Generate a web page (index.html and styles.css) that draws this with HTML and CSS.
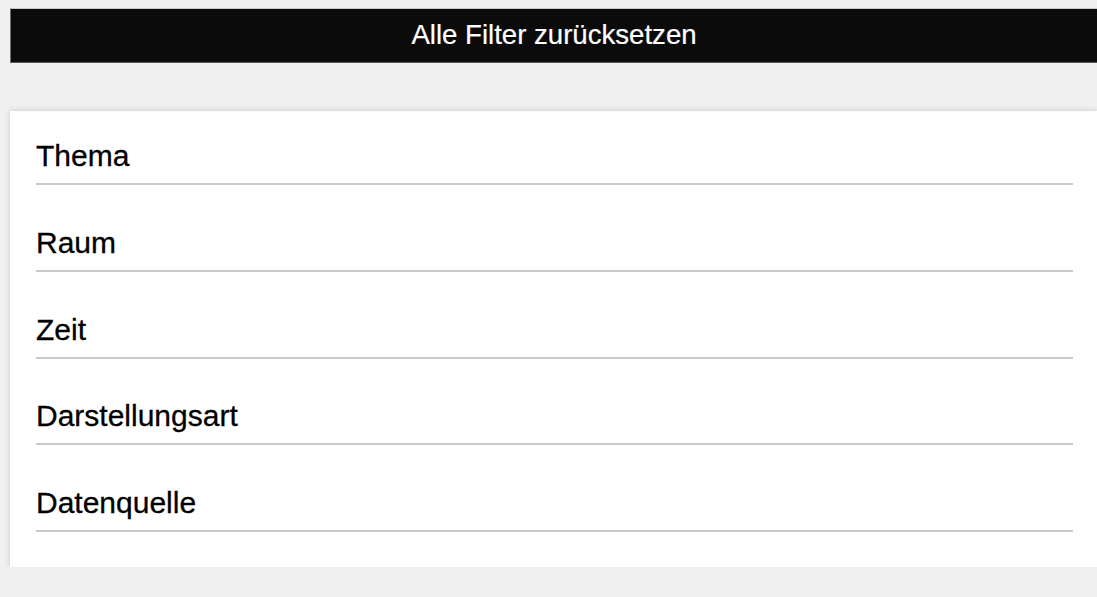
FILE: index.html
```html
<!DOCTYPE html>
<html lang="de">
<head>
<meta charset="utf-8">
<title>Filter</title>
<link rel="stylesheet" href="styles.css">
</head>
<body>
<div class="page">
  <button class="reset-btn" type="button">Alle Filter zurücksetzen</button>
  <div class="filter-card">
    <div class="filter-row">Thema</div>
    <div class="filter-row">Raum</div>
    <div class="filter-row">Zeit</div>
    <div class="filter-row">Darstellungsart</div>
    <div class="filter-row">Datenquelle</div>
  </div>
</div>
</body>
</html>
```

FILE: styles.css
```css
html, body {
  margin: 0;
  padding: 0;
  background: #f0f0f0;
  overflow: hidden;
}

.page {
  padding: 8px 0 0 10px;
  display: flex;
  flex-direction: column;
  gap: 48px;
  font-family: "Liberation Sans", Arial, sans-serif;
}

.reset-btn {
  width: 1088px;
  height: 55px;
  margin: 0;
  background: #0b0b0b;
  color: #ffffff;
  font-family: "Liberation Sans", Arial, sans-serif;
  font-size: 27.6px;
  -webkit-text-stroke: 0.2px #ffffff;
  border: 1px solid #6e6e6e;
  border-top-color: #c9c9c9;
  border-bottom-color: #5a5a5a;
  padding: 0 0 1px 0;
  text-align: center;
  cursor: pointer;
}

.filter-card {
  width: 1088px;
  box-sizing: border-box;
  background: #ffffff;
  box-shadow: 0 0 6px rgba(0, 0, 0, 0.16);
  padding: 17px 25px 35px 26px;
  display: flex;
  flex-direction: column;
  gap: 29.8px;
}

.filter-row {
  font-size: 30px;
  line-height: 34px;
  color: #000000;
  -webkit-text-stroke: 0.3px #000000;
  padding: 11px 0 10px 0;
  border-bottom: 2px solid #c9c9c9;
}
```
